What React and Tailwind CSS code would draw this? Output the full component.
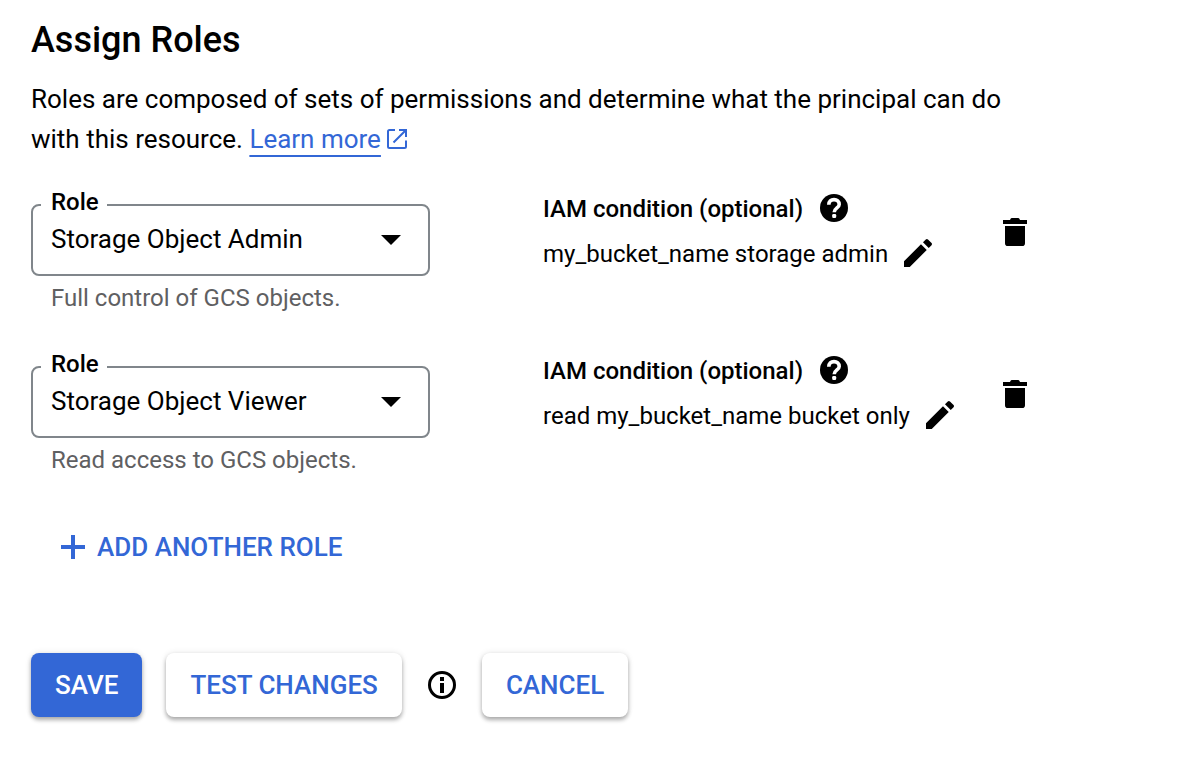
import { useState } from "react";

function OpenInNewIcon() {
  return (
    <svg viewBox="0 0 20 20" className="ml-1.5 inline-block size-5 align-[-1px]" fill="none" stroke="currentColor" strokeWidth="2" aria-hidden="true">
      <path d="M8 1H2.5Q1 1 1 2.5V17.5Q1 19 2.5 19H17.5Q19 19 19 17.5V11.5" />
      <path d="M12 1H19V8M19 1L6.5 13.5" />
    </svg>
  );
}

function HelpIcon() {
  return (
    <svg viewBox="0 0 18 18" className="size-9" aria-hidden="true">
      <circle cx="9" cy="9" r="7" fill="#000" />
      <path d="M6.4 7.4C6.4 5.7 7.5 4.8 9 4.8s2.6 1 2.6 2.4c0 1.7-2.5 1.8-2.5 3.9" fill="none" stroke="#fff" strokeWidth="1.8" />
      <rect x="8.1" y="12" width="2" height="2" rx="0.6" fill="#fff" />
    </svg>
  );
}

function EditIcon() {
  return (
    <svg viewBox="0 0 18 18" className="size-9" fill="currentColor" aria-hidden="true">
      <path d="M2 13.12l8.49-8.488 2.878 2.878L4.878 16H2v-2.88zm13.776-8.017L14.37 6.507 11.494 3.63l1.404-1.406a.764.764 0 0 1 1.081 0l1.797 1.796c.299.3.299.783 0 1.083z" />
    </svg>
  );
}

function DeleteIcon() {
  return (
    <svg viewBox="0 0 18 18" className="size-9" fill="currentColor" aria-hidden="true">
      <path d="M4 6h10v8.6A1.4 1.4 0 0 1 12.6 16H5.4A1.4 1.4 0 0 1 4 14.6V6zM3 3h3.5l.3-.6Q7 2 7.4 2h3.2q.4 0 .6.4l.3.6H15v2H3V3z" />
    </svg>
  );
}

function InfoIcon() {
  return (
    <svg viewBox="0 0 18 18" className="size-9" aria-hidden="true">
      <circle cx="9" cy="9" r="6.25" fill="none" stroke="currentColor" strokeWidth="1.5" />
      <path d="M8 5h2v2H8zM8 8h2v5H8z" fill="currentColor" />
    </svg>
  );
}

const ROLES = [
  { value: "Storage Object Admin", hint: "Full control of GCS objects." },
  { value: "Storage Object Viewer", hint: "Read access to GCS objects." },
];

const BINDINGS = [
  { id: "role-1", role: "Storage Object Admin", condition: "my_bucket_name storage admin" },
  { id: "role-2", role: "Storage Object Viewer", condition: "read my_bucket_name bucket only" },
];

function RoleRow({ id, role, condition }) {
  const [value, setValue] = useState(role);
  const hint = ROLES.find((r) => r.value === value).hint;
  return (
    <li className="grid grid-cols-[minmax(0,512px)_minmax(0,454px)_auto] items-start">
      <div className="max-w-[399px]">
        <fieldset className="relative rounded-lg border-2 border-[#80868b] px-2">
          <legend className="pr-2 pb-1.5 pl-2.5 text-2xl leading-7 font-medium">
            <label htmlFor={id}>Role</label>
          </legend>
          <select
            id={id}
            value={value}
            onChange={(e) => setValue(e.target.value)}
            className="-mt-1 block h-14 w-full appearance-none bg-transparent pr-12 pb-3.5 pl-2.5 text-[26px] leading-8 outline-none"
          >
            {ROLES.map((r) => (
              <option key={r.value}>{r.value}</option>
            ))}
          </select>
          <svg viewBox="0 0 20 10" className="pointer-events-none absolute right-[27px] bottom-[29px] h-2.5 w-5" aria-hidden="true">
            <path d="M0 0h20L10 10z" />
          </svg>
        </fieldset>
        <p className="mt-2 pl-5 text-2xl leading-7 text-[#5f6062]">{hint}</p>
      </div>
      <div className="pt-0.5 text-2xl">
        <div className="flex h-9 items-center gap-[13px]">
          <span className="pt-0.5 font-medium">IAM condition (optional)</span>
          <button type="button" aria-label="About IAM conditions"><HelpIcon /></button>
        </div>
        <div className="mt-[9px] flex h-9 items-center gap-3">
          <span className="pt-0.5">{condition}</span>
          <button type="button" aria-label="Edit condition"><EditIcon /></button>
        </div>
      </div>
      <button type="button" aria-label="Delete role" className="mt-[26px]"><DeleteIcon /></button>
    </li>
  );
}

export default function App() {
  return (
    <main className="max-w-[1080px] bg-white px-[31px] pt-4 pb-12 font-[Roboto,sans-serif] text-black">
      <h1 className="text-4xl leading-12 font-medium">Assign Roles</h1>
      <p className="mt-[15px] max-w-[1000px] text-[26px] leading-10">
        Roles are composed of sets of permissions and determine what the principal can do with this resource.{" "}
        <a href="#learn-more" className="text-[#3367d6] underline decoration-2 underline-offset-[7px]">
          Learn more
          <OpenInNewIcon />
        </a>
      </p>
      <ul className="mt-[29px] flex flex-col gap-[38px]">
        {BINDINGS.map((b) => (
          <RoleRow key={b.id} {...b} />
        ))}
      </ul>
      <button type="button" className="mt-[57px] ml-[30px] flex items-center gap-3 text-[26px] leading-8 font-medium text-[#3367d6]">
        <svg viewBox="0 0 24 24" className="size-6" fill="currentColor" aria-hidden="true">
          <path d="M10 0h4v10h10v4H14v10h-4V14H0v-4h10z" />
        </svg>
        ADD ANOTHER ROLE
      </button>
      <div className="mt-[90px] flex items-center text-[26px] font-medium">
        <button type="button" className="h-16 rounded-lg bg-[#3367d6] px-6 text-white shadow-[0_3px_4px_rgba(0,0,0,0.3),0_0_6px_rgba(0,0,0,0.1)]">SAVE</button>
        <button type="button" className="ml-6 h-16 rounded-lg bg-white px-6 text-[#3367d6] shadow-[0_3px_4px_rgba(0,0,0,0.3),0_0_6px_rgba(0,0,0,0.1)]">TEST CHANGES</button>
        <button type="button" aria-label="About testing changes" className="mx-[22px]"><InfoIcon /></button>
        <button type="button" className="h-16 rounded-lg bg-white px-6 text-[#3367d6] shadow-[0_3px_4px_rgba(0,0,0,0.3),0_0_6px_rgba(0,0,0,0.1)]">CANCEL</button>
      </div>
    </main>
  );
}
